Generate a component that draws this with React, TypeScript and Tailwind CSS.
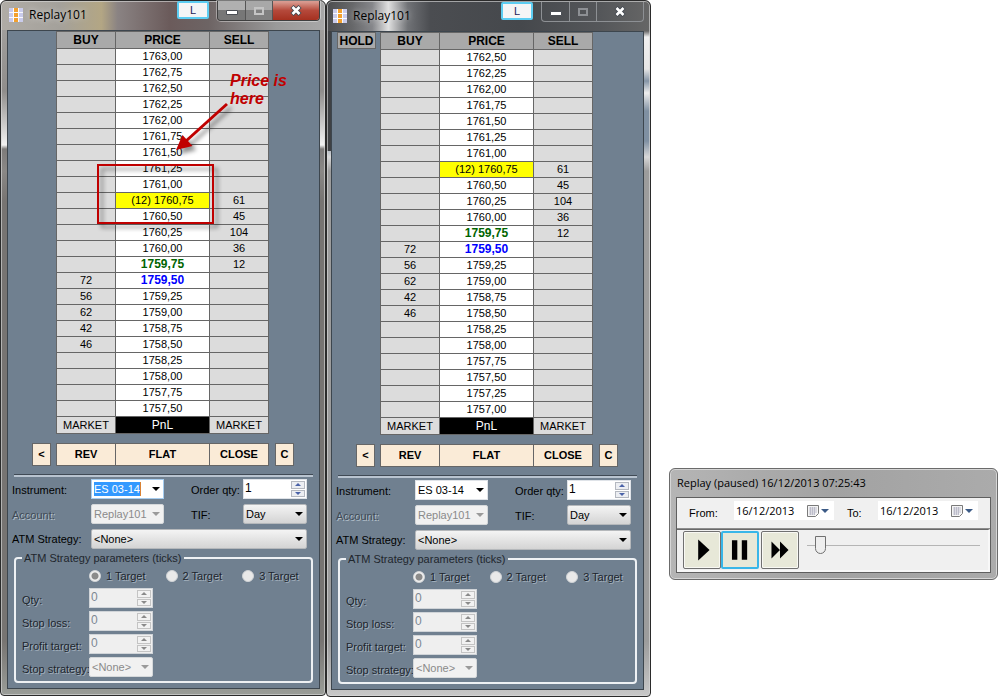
import React from 'react';
import clsx from 'clsx';

type Row = { price: string; buy?: string; sell?: string; tone?: 'last' | 'ask' | 'bid' };

const depth: Row[] = [
  { price: '(12) 1760,75', sell: '61', tone: 'last' },
  { price: '1760,50', sell: '45' },
  { price: '1760,25', sell: '104' },
  { price: '1760,00', sell: '36' },
  { price: '1759,75', sell: '12', tone: 'ask' },
  { price: '1759,50', buy: '72', tone: 'bid' },
  { price: '1759,25', buy: '56' },
  { price: '1759,00', buy: '62' },
  { price: '1758,75', buy: '42' },
  { price: '1758,50', buy: '46' },
  { price: '1758,25' },
  { price: '1758,00' },
  { price: '1757,75' },
  { price: '1757,50' },
];

const plain = (prices: string[]): Row[] => prices.map(price => ({ price }));

const ladderA: Row[] = [
  ...plain(['1763,00', '1762,75', '1762,50', '1762,25', '1762,00', '1761,75', '1761,50', '1761,25', '1761,00']),
  ...depth,
];

const ladderB: Row[] = [
  ...plain(['1762,50', '1762,25', '1762,00', '1761,75', '1761,50', '1761,25', '1761,00']),
  ...depth,
  ...plain(['1757,25', '1757,00']),
];

const etched = 'text-[#1d252d] [text-shadow:1px_1px_0_#a3b0bd]';

const Caret = ({ className }: { className?: string }) => (
  <svg viewBox="0 0 8 4" className={clsx('pointer-events-none absolute right-1 top-2 h-1 w-2', className)} fill="currentColor">
    <path d="M0 0h8L4 4z" />
  </svg>
);

const Select = ({ id, value, disabled, className }: { id: string; value: string; disabled?: boolean; className?: string }) => (
  <div className={clsx('relative', disabled ? 'text-[#8a8a8a]' : 'text-black', className)}>
    <select
      id={id}
      disabled={disabled}
      defaultValue={value}
      className={clsx(
        'block h-5 w-full appearance-none rounded-xs border pl-0.5 text-[11px] leading-none opacity-100',
        disabled ? 'border-[#d5d8da] bg-[#f1f1f1]' : 'border-[#b5b8bb] bg-linear-to-b from-[#f4f4f4] to-[#d4d4d4]',
      )}
    >
      <option>{value}</option>
    </select>
    <Caret className={disabled ? 'text-[#9a9a9a]' : 'text-black'} />
  </div>
);

const Spinner = ({ id, value, disabled }: { id: string; value: string; disabled?: boolean }) => (
  <div className={clsx('flex h-5 w-16 border p-px', disabled ? 'border-[#d0d4d8] bg-[#efefef]' : 'border-[#dfe3e8] bg-white')}>
    <input
      id={id}
      disabled={disabled}
      defaultValue={value}
      className={clsx('h-4 min-w-0 flex-1 pb-0.5 text-xs leading-none outline-none', disabled ? 'text-[#7d8893]' : 'text-black')}
    />
    <div className="flex w-3.5 flex-col gap-px">
      {['M0 3h6L3 0z', 'M0 0h6L3 3z'].map((d, i) => (
        <button
          key={d}
          type="button"
          disabled={disabled}
          aria-label={i === 0 ? 'Increase' : 'Decrease'}
          className={clsx(
            'flex flex-1 items-center justify-center border',
            disabled ? 'border-[#c4c4c4] bg-[#f2f2f2] text-[#8a8a8a]' : 'border-[#b4b8c0] bg-[#eceef2] text-[#4a62a8]',
          )}
        >
          <svg viewBox="0 0 6 3" className="h-[3px] w-1.5" fill="currentColor"><path d={d} /></svg>
        </button>
      ))}
    </div>
  </div>
);

const AppIcon = () => (
  <svg viewBox="0 0 14 14" className="size-3.5">
    <path fill="#fafafe" d="M0 0h14v14H0z" />
    <path fill="#c9cbeb" d="M0 0h4v4H0zM0 5h4v4H0zM0 10h4v4H0zM10 0h4v4h-4zM10 5h4v4h-4zM10 10h4v4h-4z" />
    <path fill="#f2a02e" d="M5 0h4v4H5zM5 5h4v4H5zM5 10h4v4H5z" />
  </svg>
);

const TitleBar = ({ active }: { active?: boolean }) => (
  <header className="flex h-[29px] items-start">
    <div className="flex flex-1 items-center gap-1.5 pt-1.5 pl-0.5">
      <AppIcon />
      <h2 className="font-['Open_Sans',sans-serif] text-xs leading-4 text-black [text-shadow:0_0_6px_#ffffffb0]">Replay101</h2>
    </div>
    <button type="button" className="mr-2 h-[18px] w-8 rounded-xs border-2 border-[#5ccdf2] bg-[#f4f5f6] text-[11px] leading-none text-[#1c2458]">L</button>
    <div className={clsx('flex h-5 overflow-hidden rounded-b border border-t-0', active ? 'border-[#3f3f3f] shadow-[0_0_0_1px_#ffffff60]' : 'border-[#8d9094]')}>
      <button type="button" aria-label="Minimize" className={clsx('flex w-7 items-center justify-center border-r', active ? 'border-[#555] bg-linear-to-b from-[#b0b0b0] from-45% to-[#777] to-50%' : 'border-[#8d9094]')}>
        <svg viewBox="0 0 12 5" className="mt-1 h-[5px] w-3"><path d="M.5.5h11v4H.5z" fill="#fff" stroke="#4b4f55" /></svg>
      </button>
      <button type="button" aria-label="Maximize" className={clsx('flex w-[27px] items-center justify-center border-r', active ? 'border-[#555] bg-linear-to-b from-[#a8a8a8] from-45% to-[#808080] to-50%' : 'border-[#8d9094]')}>
        <svg viewBox="0 0 10 8" className="h-2 w-2.5"><path d="M1 1h8v6H1z" fill="none" stroke={active ? '#c4c4c4' : '#8d9094'} strokeWidth="2" /></svg>
      </button>
      <button type="button" aria-label="Close" className={clsx('flex w-[46px] items-center justify-center', active && 'bg-linear-to-b from-[#d89a90] from-5% via-[#b5493b] via-50% to-[#a5301f]')}>
        <svg viewBox="0 0 12 11" className="h-[11px] w-3">
          <path d="M2 1.500L10 9.500M10 1.500L2 9.500" stroke="#454a52" strokeWidth="4.500" />
          <path d="M2.500 2L9.500 9M9.500 2L2.500 9" stroke="#fff" strokeWidth="2.600" />
        </svg>
      </button>
    </div>
  </header>
);

const Ladder = ({ rows }: { rows: Row[] }) => (
  <table className="w-[213px] table-fixed border-collapse text-center text-[11px] leading-[15px]">
    <colgroup>
      <col className="w-[59px]" />
      <col className="w-[94px]" />
      <col className="w-[59px]" />
    </colgroup>
    <thead className="bg-[#a9a9a9] text-xs leading-4">
      <tr>
        {['BUY', 'PRICE', 'SELL'].map(h => (
          <th key={h} className="border border-[#666] p-0 font-bold">{h}</th>
        ))}
      </tr>
    </thead>
    <tbody>
      {rows.map(r => (
        <tr key={r.price} className="h-4">
          <td className="border border-[#666] bg-[#dcdcdc] p-0">{r.buy}</td>
          <td
            className={clsx(
              'border border-[#666] p-0',
              r.tone === 'last' ? 'bg-[#ffff00]' : 'bg-white',
              r.tone === 'ask' && 'text-xs leading-[15px] font-bold text-[#006400]',
              r.tone === 'bid' && 'text-xs leading-[15px] font-bold text-[#0000ff]',
            )}
          >
            {r.price}
          </td>
          <td className="border border-[#666] bg-[#dcdcdc] p-0">{r.sell}</td>
        </tr>
      ))}
    </tbody>
    <tfoot className="leading-4">
      <tr>
        <td className="border border-[#666] bg-[#dcdcdc] p-0">MARKET</td>
        <td className="border border-[#666] bg-black p-0 text-xs leading-4 text-white">PnL</td>
        <td className="border border-[#666] bg-[#dcdcdc] p-0">MARKET</td>
      </tr>
    </tfoot>
  </table>
);

const orderButton = 'h-[23px] border border-[#666] bg-[#faebd7] text-[11px] font-bold text-black';

const OrderButtons = () => (
  <div className="mt-[9px] flex pl-6">
    <button type="button" className={clsx(orderButton, 'mr-[5px] w-[19px]')}>&lt;</button>
    <button type="button" className={clsx(orderButton, 'w-[60px]')}>REV</button>
    <button type="button" className={clsx(orderButton, '-ml-px w-[95px]')}>FLAT</button>
    <button type="button" className={clsx(orderButton, '-ml-px w-[60px]')}>CLOSE</button>
    <button type="button" className={clsx(orderButton, 'ml-1.5 w-[19px]')}>C</button>
  </div>
);

const OrderForm = ({ id, focused }: { id: string; focused?: boolean }) => (
  <form className="mt-0.5 mr-3 ml-1 grid grid-cols-[79px_73px_1fr_64px] items-center gap-y-[5px] text-[11px] leading-4 whitespace-nowrap text-black">
    <label htmlFor={`${id}-instrument`} className="pt-0.5">Instrument:</label>
    <div className="relative">
      <div className={clsx('flex h-5 items-center border bg-white pl-0.5', focused ? 'border-[#a6cdf0]' : 'border-[#dfe3e8]')}>
        <input
          id={`${id}-instrument`}
          defaultValue="ES 03-14"
          className={clsx('h-[14px] w-[47px] text-[11px] leading-none outline-none', focused && 'border-r border-[#d98234] bg-[#3399ff] text-white')}
        />
      </div>
      <Caret />
    </div>
    <label htmlFor={`${id}-qty`} className="pt-0.5 pl-[27px]">Order qty:</label>
    <Spinner id={`${id}-qty`} value="1" />

    <label htmlFor={`${id}-account`} className="pt-0.5 text-[#3f4a55] [text-shadow:1px_1px_0_#b4c0cc]">Account:</label>
    <Select id={`${id}-account`} value="Replay101" disabled />
    <label htmlFor={`${id}-tif`} className="pt-0.5 pl-[27px]">TIF:</label>
    <Select id={`${id}-tif`} value="Day" />

    <label htmlFor={`${id}-atm`}>ATM Strategy:</label>
    <Select id={`${id}-atm`} value="<None>" className="col-span-3" />
  </form>
);

const StrategyParams = ({ id }: { id: string }) => (
  <fieldset className="mx-1.5 mt-px rounded-sm border-2 border-[#eef1f4] px-1.5 pb-1 text-[11px] leading-4">
    <legend className="px-0.5 text-[#1f262d]">ATM Strategy parameters (ticks)</legend>
    <div className="flex gap-5 pt-0.5 pb-1 pl-[67px]">
      {['1 Target', '2 Target', '3 Target'].map((t, i) => (
        <label key={t} className={clsx('flex items-center gap-[5px]', etched)}>
          <input
            type="radio"
            name={`${id}-target`}
            disabled
            defaultChecked={i === 0}
            className="size-3 appearance-none rounded-full border border-[#d0d3d6] bg-[#e9e9e9] checked:bg-[radial-gradient(circle,#8b8b8b_0_3px,#f0f0f0_4px)]"
          />
          {t}
        </label>
      ))}
    </div>
    <div className="grid grid-cols-[67px_64px] gap-y-[3px]">
      {['Qty', 'Stop loss', 'Profit target'].map(name => (
        <React.Fragment key={name}>
          <label htmlFor={`${id}-${name}`} className={clsx('pt-1 whitespace-nowrap', etched)}>{name}:</label>
          <Spinner id={`${id}-${name}`} value="0" disabled />
        </React.Fragment>
      ))}
      <label htmlFor={`${id}-strategy`} className={clsx('pt-1 whitespace-nowrap', etched)}>Stop strategy:</label>
      <Select id={`${id}-strategy`} value="<None>" disabled />
    </div>
  </fieldset>
);

const Annotation = () => (
  <div className="pointer-events-none absolute inset-0">
    <p className="absolute top-[71px] left-[229px] w-16 text-base leading-[18px] font-bold text-[#c00000] italic">Price is here</p>
    <svg viewBox="0 0 324 240" className="absolute top-0 left-0 h-60 w-[324px] [filter:drop-shadow(4px_4px_2px_#00000070)]">
      <path d="M226 103L185 140" stroke="#c00000" strokeWidth="3" />
      <path d="M175 149L181.500 134L191.500 145z" fill="#c00000" />
      <path d="M97 164h115v58H97z" fill="none" stroke="#c00000" strokeWidth="2" />
    </svg>
  </div>
);

// title bar reflection on top, side frame reflection below it
const glassActive =
  'bg-[linear-gradient(90deg,#b0aca6_0,#a4a19b_18%,#b3a684_31%,#8a8383_36%,#6b5b5b_52%,#6d6464_64%,#9a9a9a_85%,#a8a8a8_100%),linear-gradient(#a8a6a4_0,#8f8d8b_90px,#f2f2f2_144px,#7d7b7a_148px,#8a8886_170px,#777472_200px,#777472_640px,#9a9d98_100%)] bg-size-[100%_29px,100%_100%] bg-no-repeat';
const glassInactive =
  'bg-[linear-gradient(90deg,#4c4d4f_0,#67686a_8%,#85868a_14%,#e0e0e0_19%,#707276_25%,#4b4d51_32%,#45484c_60%,#55575a_85%,#666_100%),linear-gradient(90deg,#3f4144_50%,transparent_50%),linear-gradient(#666_30px,#f0f0f0_36px,#e6e6e6_68px,#8494a6_80px,#eee_92px,#7f90a2_110px,#7f90a2_140px,#d8d8d8_156px,#9c9c9c_170px,#9c9c9c_640px,#c8c8c8_100%)] bg-size-[100%_30px,100%_150px,100%_100%] bg-no-repeat';

const DomWindow = ({ id, rows, active }: { id: string; rows: Row[]; active?: boolean }) => (
  <section
    className={clsx(
      'relative rounded-t-md rounded-b border border-[#2b2b2b] pb-1.5 font-["Liberation_Sans",Arial,sans-serif] shadow-[inset_0_0_0_1px_#d8d8d8a0]',
      active ? `${glassActive} pr-[5px] pl-1.5` : `${glassInactive} pt-px pr-1.5 pl-1`,
    )}
  >
    <TitleBar active={active} />
    <div className="border border-[#3d464e] bg-[#708090] pb-[5px]">
      <div className="flex items-start">
        <div className="w-12 pl-[5px]">
          {!active && (
            <button type="button" className="block h-[17px] w-[39px] border border-[#666] bg-[#a9a9a9] text-xs leading-none font-bold">HOLD</button>
          )}
        </div>
        <Ladder rows={rows} />
      </div>
      <OrderButtons />
      <hr className="mx-1.5 mt-2 h-[3px] border-t border-b-2 border-t-[#404a55] border-b-[#b9c4d0]" />
      <OrderForm id={id} focused={active} />
      <StrategyParams id={id} />
    </div>
    {active && <Annotation />}
  </section>
);

const DateField = ({ id, label }: { id: string; label: string }) => (
  <div className="flex items-start">
    <label htmlFor={id} className="pt-1">{label}</label>
    <div className="ml-auto flex h-[19px] w-[100px] items-center bg-white pl-0.5">
      <input id={id} defaultValue="16/12/2013" className="min-w-0 flex-1 font-['Open_Sans',sans-serif] text-[11px] leading-none outline-none" />
      <button type="button" aria-label="Open calendar" className="flex items-center gap-0.5 pr-[5px]">
        <svg viewBox="0 0 12 12" className="size-3">
          <path d="M.5.5h11v8l-3 3h-8z" fill="#f5f5f5" stroke="#7a7a7a" />
          <path d="M2 3h8M2 5h8M2 7h8M2 9h6M3.500 2v8M5.500 2v8M7.500 2v8" stroke="#b4b4c4" strokeWidth=".8" />
        </svg>
        <svg viewBox="0 0 8 4" className="h-1 w-2"><path d="M0 0h8L4 4z" fill="#3b5a86" /></svg>
      </button>
    </div>
  </div>
);

const transport = [
  { label: 'Play', d: 'M14 8L26 19L14 30z' },
  { label: 'Pause', d: 'M9 8h6v22H9zM20 8h6v22h-6z' },
  { label: 'Fast forward', d: 'M9 10L18 19L9 28zM18 10L27 19L18 28z' },
];

const ReplayPanel = () => (
  <section className="rounded-md border border-[#6b6b6b] bg-linear-to-r from-[#b5b5b5] via-[#a2a2a2] to-[#ababab] px-1.5 pb-1.5 font-['Liberation_Sans',Arial,sans-serif] shadow-[inset_0_0_0_1px_#d6d6d6]">
    <h2 className="py-1.5 pl-px font-['Open_Sans',sans-serif] text-[11px] leading-4 text-black">Replay (paused) 16/12/2013 07:25:43</h2>
    <div className="border border-[#5f5f5f] bg-[#f0f0f0] text-[11px] leading-4">
      <div className="grid h-[31px] grid-cols-[145px_131px] gap-[13px] border-b border-[#8d8d8d] pt-[3px] pl-3">
        <DateField id="from" label="From:" />
        <DateField id="to" label="To:" />
      </div>
      <div className="flex border-2 border-t border-l-0 border-[#f8f8f8] border-t-[#696969] py-px pl-1.5">
        {transport.map((t, i) => (
          <button
            key={t.label}
            type="button"
            aria-label={t.label}
            className={clsx('h-[38px] w-[38px] rounded-xs bg-[#e7e8d8]', i === 1 ? 'border-2 border-[#38b6e8]' : 'border border-[#707070] inset-ring inset-ring-white/70', i === 2 && 'ml-0.5')}
          >
            <svg viewBox="0 0 36 38" className="size-full"><path d={t.d} /></svg>
          </button>
        ))}
        <input
          type="range"
          aria-label="Replay speed"
          defaultValue="5"
          className="mx-2 mt-1 h-5 min-w-0 flex-1 appearance-none bg-[linear-gradient(#b5b5b5,#b5b5b5)] bg-size-[100%_1px] bg-center bg-no-repeat [&::-webkit-slider-thumb]:h-[18px] [&::-webkit-slider-thumb]:w-[11px] [&::-webkit-slider-thumb]:appearance-none [&::-webkit-slider-thumb]:rounded-b-md [&::-webkit-slider-thumb]:border [&::-webkit-slider-thumb]:border-[#707070] [&::-webkit-slider-thumb]:bg-[#eeeeee]"
        />
      </div>
    </div>
  </section>
);

export default function App() {
  return (
    <main className="grid min-h-screen grid-cols-[326fr_325fr_347fr] items-start bg-white">
      <DomWindow id="left" rows={ladderA} active />
      <DomWindow id="right" rows={ladderB} />
      <div className="pt-[468px] pl-[18px]">
        <ReplayPanel />
      </div>
    </main>
  );
}
